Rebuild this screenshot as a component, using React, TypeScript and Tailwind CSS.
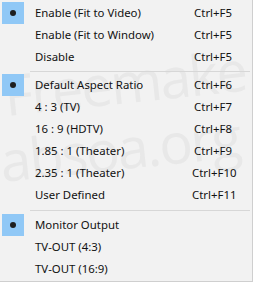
import React from "react";

type Item = { label: string; shortcut?: string; checked?: boolean } | "sep" | "sep2";

const items: Item[] = [
  { label: "Enable (Fit to Video)", shortcut: "Ctrl+F5", checked: true },
  { label: "Enable (Fit to Window)", shortcut: "Ctrl+F5" },
  { label: "Disable", shortcut: "Ctrl+F5" },
  "sep",
  { label: "Default Aspect Ratio", shortcut: "Ctrl+F6", checked: true },
  { label: "4 : 3 (TV)", shortcut: "Ctrl+F7" },
  { label: "16 : 9 (HDTV)", shortcut: "Ctrl+F8" },
  { label: "1.85 : 1 (Theater)", shortcut: "Ctrl+F9" },
  { label: "2.35 : 1 (Theater)", shortcut: "Ctrl+F10" },
  { label: "User Defined", shortcut: "Ctrl+F11" },
  "sep2",
  { label: "Monitor Output", checked: true },
  { label: "TV-OUT (4:3)" },
  { label: "TV-OUT (16:9)" },
];

export default function App() {
  return (
    <div className="w-[254px] h-[283px] bg-white overflow-hidden">
      <div
        className="relative w-[253px] h-[282px] bg-[#f2f2f2] border-r border-b border-[#cfcfcf] text-[11.4px] text-[#111] overflow-hidden"
        style={{ fontFamily: '"Noto Sans", "Segoe UI", sans-serif' }}
      >
        <div className="pointer-events-none absolute inset-0 select-none" aria-hidden="true">
          <div
            className="absolute left-[4px] top-[66px] text-[56px] leading-none tracking-[-2px] text-[#e8e8e8] -rotate-[6deg] origin-left whitespace-nowrap"
            style={{ fontFamily: '"Open Sans", sans-serif' }}
          >
            Freemake
          </div>
          <div
            className="absolute left-[0px] top-[132px] text-[56px] leading-none tracking-[-2px] text-[#e8e8e8] -rotate-[6deg] origin-left whitespace-nowrap"
            style={{ fontFamily: '"Open Sans", sans-serif' }}
          >
            absoa.org
          </div>
        </div>
        <div className="relative flex flex-col pt-[2px]">
          {items.map((it, i) =>
            it === "sep" || it === "sep2" ? (
              <div key={i} className={`${it === "sep" ? "h-[6px]" : "h-[8px]"} flex items-center pl-[30px] pr-[2px]`}>
                <div className="h-px w-full bg-[#d7d7d7]" />
              </div>
            ) : (
              <div key={i} className="h-[22px] flex items-center">
                <div className="w-[35px] h-[22px] flex items-center pl-[2px]">
                  {it.checked ? (
                    <div className="w-[22px] h-[22px] bg-[#90c8f6] flex items-center justify-center">
                      <div className="w-[6px] h-[6px] rounded-full bg-[#1e1e1e]" />
                    </div>
                  ) : null}
                </div>
                <div className="flex-1 whitespace-nowrap">{it.label}</div>
                <div className="w-[60px] pr-[20px] text-right whitespace-nowrap">{it.shortcut}</div>
              </div>
            )
          )}
        </div>
      </div>
    </div>
  );
}
